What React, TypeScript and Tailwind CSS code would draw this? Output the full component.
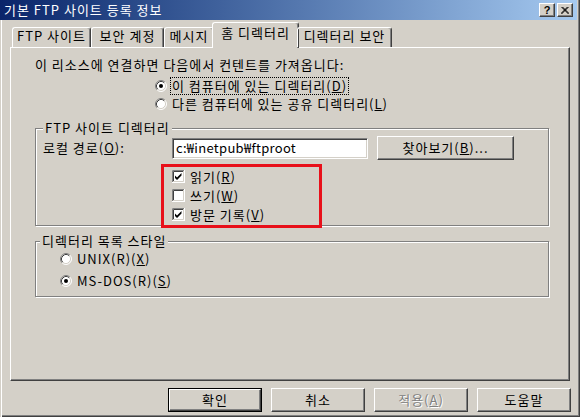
import React from "react";

const Radio = ({ checked }: { checked?: boolean }) => (
  <svg width="12" height="12" viewBox="0 0 12 12" className="shrink-0">
    <circle cx="6" cy="6" r="5" fill="#fff" />
    <path d="M2.11 9.89 A5.5 5.5 0 0 1 9.89 2.11" fill="none" stroke="#808080" />
    <path d="M2.82 9.18 A4.5 4.5 0 0 1 9.18 2.82" fill="none" stroke="#404040" />
    <path d="M9.89 2.11 A5.5 5.5 0 0 1 2.11 9.89" fill="none" stroke="#fff" />
    <path d="M9.18 2.82 A4.5 4.5 0 0 1 2.82 9.18" fill="none" stroke="#d4d0c8" />
    {checked && <circle cx="6" cy="6" r="2" fill="#000" />}
  </svg>
);

const Check = ({ checked }: { checked?: boolean }) => (
  <svg width="13" height="13" viewBox="0 0 13 13" className="shrink-0">
    <rect width="13" height="13" fill="#fff" />
    <path d="M0.5 12.5 V0.5 H12.5" fill="none" stroke="#808080" />
    <path d="M1.5 11.5 V1.5 H11.5" fill="none" stroke="#404040" />
    <path d="M0 12.5 H12.5 V0" fill="none" stroke="#fff" />
    <path d="M1 11.5 H11.5 V1" fill="none" stroke="#d4d0c8" />
    {checked && <path d="M3 5.5 L5 7.5 L9.5 3 L9.5 5.5 L5 10 L3 8 Z" fill="#000" />}
  </svg>
);

const raised =
  "bg-[#d4d0c8] border border-t-white border-l-white border-r-[#404040] border-b-[#404040] shadow-[inset_-1px_-1px_0_#808080]";

const tabs = [
  { label: "FTP 사이트", w: "w-[79px]" },
  { label: "보안 계정", w: "w-[73px]" },
  { label: "메시지", w: "w-[50px]" },
  { label: "홈 디렉터리", w: "w-[87px]", active: true },
  { label: "디렉터리 보안", w: "w-[95px]" },
];

const App: React.FC = () => {
  return (
    <div className="relative w-[580px] h-[417px] overflow-hidden bg-[#d4d0c8] text-black text-[13px] leading-[16px] tracking-[1px] font-['Noto_Sans_CJK_KR',sans-serif] shadow-[inset_1px_0_0_#d4d0c8,inset_2px_0_0_#fff,inset_-1px_-1px_0_#404040,inset_-2px_-2px_0_#808080]">
      {/* title bar */}
      <div className="w-[577px] h-[20px] bg-linear-to-r from-[#0a246a] to-[#a6caf0] flex items-center pl-[4px] pr-[4px]">
        <span className="text-white text-[13px]">기본 FTP 사이트 등록 정보</span>
        <div className="ml-auto flex gap-[2px]">
          <div className={`${raised} w-[16px] h-[14px] flex items-center justify-center text-[11px] font-bold leading-none tracking-normal font-['Liberation_Sans',sans-serif]`}>
            ?
          </div>
          <div className={`${raised} w-[16px] h-[14px] flex items-center justify-center`}>
            <svg width="8" height="7" viewBox="0 0 8 7">
              <path d="M0.5 0 L7.5 7 M1.5 0 L8 6.5 M7.5 0 L0.5 7 M6.5 0 L0 6.5" stroke="#000" strokeWidth="1" />
            </svg>
          </div>
        </div>
      </div>

      {/* tab strip */}
      <div className="relative z-10 h-[27px] flex items-end pl-[12px]">
        {tabs.map((t) =>
          t.active ? (
            <div
              key={t.label}
              className={`${t.w} -mx-[2px] h-[26px] -mb-[1px] bg-[#d4d0c8] border-t border-l border-r border-t-white border-l-white border-r-[#404040] rounded-t-[3px] shadow-[inset_-1px_0_0_#808080] flex justify-center pt-[2px] whitespace-nowrap`}
            >
              {t.label}
            </div>
          ) : (
            <div
              key={t.label}
              className={`${t.w} h-[20px] border-t border-l border-r border-t-white border-l-white border-r-[#404040] rounded-t-[3px] shadow-[inset_-1px_0_0_#808080] flex justify-center whitespace-nowrap`}
            >
              {t.label}
            </div>
          )
        )}
      </div>

      {/* panel */}
      <div className="ml-[10px] w-[560px] h-[334px] border border-t-white border-l-white border-r-[#404040] border-b-[#404040] shadow-[inset_-1px_-1px_0_#808080] flex flex-col">
        <div className="ml-[24px] mt-[9px] h-[16px]">이 리소스에 연결하면 다음에서 컨텐트를 가져옵니다:</div>
        <div className="ml-[144px] mt-[4px] h-[18px] flex items-center gap-[5px]">
          <Radio checked />
          <span className="outline-1 outline-dotted outline-black -ml-[1px] px-[1px]">
            이 컴퓨터에 있는 디렉터리(<u>D</u>)
          </span>
        </div>
        <div className="ml-[144px] h-[18px] flex items-center gap-[5px]">
          <Radio />
          <span>
            다른 컴퓨터에 있는 공유 디렉터리(<u>L</u>)
          </span>
        </div>

        {/* group 1 */}
        <div className="relative ml-[24px] mt-[15px] w-[514px] h-[98px] border border-[#808080] shadow-[inset_1px_1px_0_#fff,1px_1px_0_#fff]">
          <span className="absolute left-[7px] -top-[7px] px-[2px] leading-[12px] bg-[#d4d0c8]">FTP 사이트 디렉터리</span>
          <div className="mt-[7px] h-[24px] flex items-center">
            <span className="ml-[7px] w-[129px]">
              로컬 경로(<u>O</u>):
            </span>
            <div className="w-[196px] h-[21px] bg-white border border-t-[#808080] border-l-[#808080] border-r-white border-b-white shadow-[inset_1px_1px_0_#404040,inset_-1px_-1px_0_#d4d0c8] flex items-center pl-[3px] tracking-[0.3px] whitespace-nowrap overflow-hidden">
              c:₩inetpub₩ftproot
            </div>
            <div className={`${raised} ml-[9px] w-[137px] h-[24px] flex items-center justify-center`}>
              찾아보기(<u>B</u>)...
            </div>
          </div>
          <div className="mt-[7px] ml-[136px] flex flex-col">
            <div className="h-[19px] flex items-center gap-[5px]">
              <Check checked />
              <span>
                읽기(<u>R</u>)
              </span>
            </div>
            <div className="h-[19px] flex items-center gap-[5px]">
              <Check />
              <span>
                쓰기(<u>W</u>)
              </span>
            </div>
            <div className="h-[19px] flex items-center gap-[5px]">
              <Check checked />
              <span>
                방문 기록(<u>V</u>)
              </span>
            </div>
          </div>
        </div>

        {/* group 2 */}
        <div className="relative ml-[24px] mt-[15px] w-[514px] h-[56px] border border-[#808080] shadow-[inset_1px_1px_0_#fff,1px_1px_0_#fff] pt-[7px] flex flex-col gap-[2px]">
          <span className="absolute left-[4px] -top-[7px] px-[2px] leading-[12px] bg-[#d4d0c8]">디렉터리 목록 스타일</span>
          <div className="ml-[24px] h-[20px] flex items-center gap-[5px]">
            <Radio />
            <span>
              UNIX(R)(<u>X</u>)
            </span>
          </div>
          <div className="ml-[24px] h-[20px] flex items-center gap-[5px]">
            <Radio checked />
            <span>
              MS-DOS(R)(<u>S</u>)
            </span>
          </div>
        </div>
      </div>

      {/* buttons */}
      <div className="mt-[7px] ml-[168px] flex gap-[9px]">
        <div className="w-[94px] h-[24px] border border-black">
          <div className={`${raised} w-full h-full flex items-center justify-center`}>확인</div>
        </div>
        <div className={`${raised} w-[94px] h-[24px] flex items-center justify-center`}>취소</div>
        <div className={`${raised} w-[94px] h-[24px] flex items-center justify-center text-[#808080] [text-shadow:1px_1px_0_#fff]`}>
          적용(<u>A</u>)
        </div>
        <div className={`${raised} w-[94px] h-[24px] flex items-center justify-center`}>도움말</div>
      </div>

      {/* red annotation box */}
      <div className="absolute left-[161px] top-[164px] w-[161px] h-[64px] border-[3px] border-[#e8101a]" />
    </div>
  );
};

export default App;
